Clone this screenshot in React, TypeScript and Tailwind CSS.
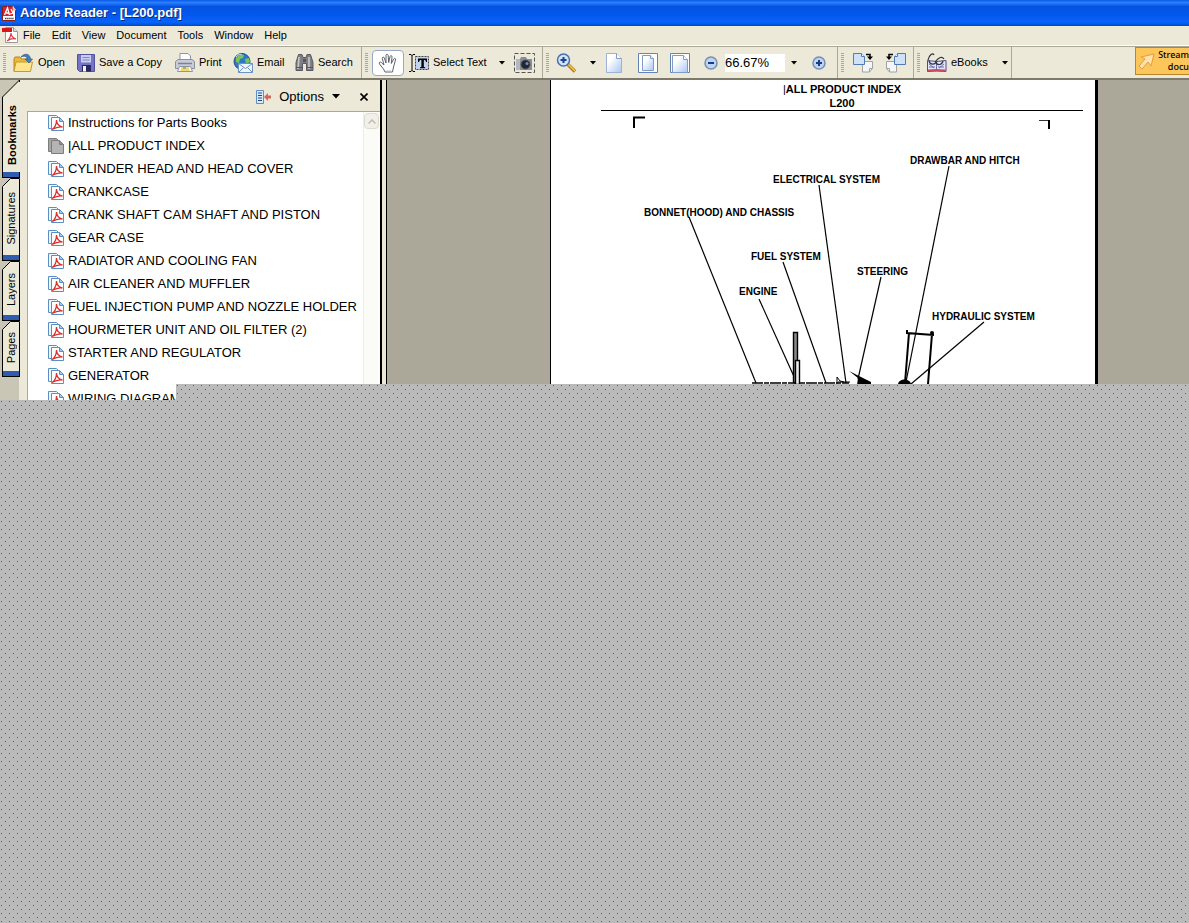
import React, { useState } from 'react';

const menus = ['File', 'Edit', 'View', 'Document', 'Tools', 'Window', 'Help'];

const bookmarks = [
  'Instructions for Parts Books',
  '|ALL PRODUCT INDEX',
  'CYLINDER HEAD AND HEAD COVER',
  'CRANKCASE',
  'CRANK SHAFT CAM SHAFT AND PISTON',
  'GEAR CASE',
  'RADIATOR AND COOLING FAN',
  'AIR CLEANER AND MUFFLER',
  'FUEL INJECTION PUMP AND NOZZLE HOLDER',
  'HOURMETER UNIT AND OIL FILTER (2)',
  'STARTER AND REGULATOR',
  'GENERATOR',
  'WIRING DIAGRAM',
];

const tabs = [
  { label: 'Bookmarks', height: 'h-[98px]' },
  { label: 'Signatures', height: 'h-[83px]' },
  { label: 'Layers', height: 'h-[60px]' },
  { label: 'Pages', height: 'h-[56px]' },
];

const labels = [
  { text: 'DRAWBAR AND HITCH', x: 359, y: 53 },
  { text: 'ELECTRICAL SYSTEM', x: 222, y: 72 },
  { text: 'BONNET(HOOD) AND CHASSIS', x: 93, y: 105 },
  { text: 'FUEL SYSTEM', x: 200, y: 149 },
  { text: 'STEERING', x: 306, y: 164 },
  { text: 'ENGINE', x: 188, y: 184 },
  { text: 'HYDRAULIC SYSTEM', x: 381, y: 209 },
];

/* ---------- icons ---------- */

const AppIcon = () => (
  <svg width="16" height="17" viewBox="0 0 16 17">
    <path d="M1.500 1.500h10l3 3v11h-13z" fill="#fff" stroke="#8b1a1a" />
    <path d="M2 2h10v9H2z" fill="#d8232a" />
    <path d="M12 1v4h3" fill="#f0e4e4" stroke="#c99" strokeWidth=".8" />
    <path d="M3.500 10l3-7 2 7M5 8h3M10 4l2 4-3 1" fill="none" stroke="#fff" strokeWidth="1.300" />
    <path d="M4 13.500h9" stroke="#444" strokeWidth="1.600" strokeDasharray="1.500 .6" />
  </svg>
);

const PdfIcon = () => (
  <svg width="16" height="17" viewBox="0 0 16 17">
    <path d="M3.500.5h8l4 4v11h-12z" fill="#fff" stroke="#9a9a9a" />
    <path d="M11.500.5v4h4" fill="#ddd" stroke="#9a9a9a" />
    <path d="M0 1h10v4H0z" fill="#d8161c" />
    <path d="M5 14c2-1 4-5 4-8 0 3 2 5 5 6-3-1-6 0-9 2z" fill="none" stroke="#e03a3a" strokeWidth="1.200" />
  </svg>
);

const OpenIcon = () => (
  <svg width="21" height="20" viewBox="0 0 21 20">
    <path d="M1 6l1-2h5l1.500 2H17v12H1z" fill="#e9b93a" stroke="#b58618" />
    <path d="M3 9h16.500l-2 9.500H1z" fill="#ffe48a" stroke="#c79a2b" />
    <path d="M8 4c3-4 9-4 9.500 2h2L16 10l-4-4h2.500c-.5-3-3.500-3.500-6.500-2z" fill="#3f7fc4" stroke="#1f4f8c" strokeWidth=".6" />
  </svg>
);

const SaveIcon = () => (
  <svg width="18" height="18" viewBox="0 0 18 18">
    <path d="M.5.5h17v17h-15l-2-2z" fill="#7672c4" stroke="#5250a0" />
    <path d="M4 1h10v7.500H4z" fill="#c9cdf0" />
    <path d="M5.500 3.500h7M5.500 6h7" stroke="#8488c0" />
    <path d="M5 11h9v6.500H5z" fill="#2a2860" />
    <path d="M6 12h3v5.500H6z" fill="#f4f4ff" />
  </svg>
);

const PrintIcon = () => (
  <svg width="20" height="20" viewBox="0 0 20 20">
    <path d="M5 8V.5h8l2.500 2.500v5z" fill="#fff" stroke="#8c94a8" />
    <path d="M.5 8.500L3 6.500h14l2.500 2v7H.5z" fill="#c9ccd6" stroke="#8b90a0" />
    <path d="M3 10.500h14" stroke="#7c8292" strokeWidth="1.500" />
    <path d="M2.500 18.500l2-5h11l2 5z" fill="#fff" stroke="#8c94a8" />
    <path d="M6 15h8M5.500 17h9" stroke="#f0cc3a" strokeWidth="1.500" />
    <path d="M8 15h3" stroke="#4a7fd0" />
  </svg>
);

const EmailIcon = () => (
  <svg width="20" height="20" viewBox="0 0 20 20">
    <circle cx="9" cy="8.500" r="8" fill="#2f78c8" stroke="#1c4f90" />
    <path d="M3 5c2-3 5-4 8-3l-1 3-3 1-1 4-3-1zM12 6l4-1 1 4-4 2z" fill="#7cc35a" />
    <path d="M3 4c2-3 5-3 6-2" stroke="#d8ecff" fill="none" />
    <path d="M5.500 10.500h14v9h-14z" fill="#eef5ff" stroke="#6b93c4" />
    <path d="M5.500 10.500l7 5 7-5M5.500 19.500l5-5M19.500 19.500l-5-5" fill="none" stroke="#6b93c4" />
  </svg>
);

const SearchIcon = () => (
  <svg width="19" height="19" viewBox="0 0 19 19">
    <path
      d="M3.500 1.500h3.500l1 3h3l1-3h3.500l2.500 8v8h-6.500v-7h-4v7H1v-8z"
      fill="#808084"
      stroke="#5a5a5e"
      strokeLinejoin="round"
    />
    <path d="M4 4L3 16M14 4v12" stroke="#c8c8cc" strokeWidth="1.600" />
    <path d="M8 6h3v3H8z" fill="#55555a" />
    <path d="M1 14.500h6.500M11.500 14.500H18" stroke="#55555a" />
  </svg>
);

const HandIcon = () => (
  <svg width="20" height="20" viewBox="0 0 20 20">
    <path
      d="M7 19l-1.500-3L1.500 11c-1-1.500.5-2.500 1.800-1.500L6 12 4.300 5.500c-.3-1.700 1.500-2 2-.5L8 10V2.500c0-1.700 2-1.700 2.200 0L10.700 9.500l1.300-6c.4-1.500 2.200-1 2 .5L13.300 10.500l2.400-4.500c.8-1.300 2.300-.5 1.800 1L15.500 14l-1 5z"
      fill="#fff"
      stroke="#62626e"
    />
    <path d="M8 18h5" stroke="#b8bcc8" />
  </svg>
);

const SelectTextIcon = () => (
  <svg width="20" height="18" viewBox="0 0 20 18">
    <path d="M0 .5h2l1 1 1-1h2M0 17.500h2l1-1 1 1h2M3 1v16" fill="none" stroke="#000" />
    <path d="M6.500 2.500h13v13h-13z" fill="#c3d5ee" stroke="#444" strokeDasharray="2 1" />
    <path d="M9 8V4.500h9V8h-1l-.7-1.900h-1.500V13l1.400.3v.9h-5.200v-.9l1.400-.3V6.100h-1.500L10 8z" fill="#000" />
  </svg>
);

const CameraIcon = () => (
  <svg width="21" height="20" viewBox="0 0 21 20">
    <path d="M.5.5h20v19H.5z" fill="none" stroke="#555" strokeDasharray="4 2" />
    <path d="M2 6h4l1-2h5l1 2h5v11H2z" fill="#888d96" />
    <path d="M2 6h4v11H2z" fill="#b4b8c0" />
    <circle cx="11.500" cy="11.500" r="4.500" fill="#23262e" stroke="#555" />
    <circle cx="13" cy="10.500" r="1.500" fill="#6f8fd8" />
  </svg>
);

const ZoomIcon = () => (
  <svg width="21" height="20" viewBox="0 0 21 20">
    <path d="M12 11.500l7 7" stroke="#b07818" strokeWidth="3.500" />
    <path d="M12 11l7 7" stroke="#f6c84e" strokeWidth="1.500" />
    <circle cx="7.500" cy="7" r="6" fill="#cfe3fb" stroke="#4a6fae" strokeWidth="1.500" />
    <path d="M4.500 7h6M7.500 4v6" stroke="#1f3f86" strokeWidth="2" />
  </svg>
);

const PageIcon = ({ frame = 0 }: { frame?: number }) => (
  <svg width={frame ? 20 : 16} height="20" viewBox={frame ? '0 0 20 20' : '2 0 16 20'}>
    <defs>
      <linearGradient id={`sheet-${frame}`} x1="0" y1="0" x2="1" y2="1">
        <stop offset="0.300" stopColor="#fff" />
        <stop offset="1" stopColor="#a9c6f2" />
      </linearGradient>
    </defs>
    {frame > 0 && <path d="M.5.5h19v19H.5z" fill="#fff" stroke="#6484b4" />}
    {frame === 1 && (
      <>
        <path d="M4.500 2.500h8l3 3v12h-11z" fill="url(#sheet-1)" stroke="#7f9cc8" />
        <path d="M12.500 2.500v3h3" fill="#fff" stroke="#7f9cc8" />
      </>
    )}
    {frame === 2 && (
      <>
        <path d="M2.500 2.500h11l4 4v13h-15z" fill="url(#sheet-2)" stroke="#7f9cc8" />
        <path d="M13.500 2.500v4h4" fill="#fff" stroke="#7f9cc8" />
      </>
    )}
    {frame === 0 && (
      <>
        <path d="M2.500.5h10l5 5v14h-15z" fill="url(#sheet-0)" stroke="#9db2d6" />
        <path d="M12.500.5v5h5" fill="#fff" stroke="#7f9cc8" />
      </>
    )}
  </svg>
);

const RoundIcon = ({ plus }: { plus?: boolean }) => (
  <svg width="14" height="14" viewBox="0 0 14 14">
    <circle cx="7" cy="7" r="6" fill="#bcd5f6" stroke="#7a8fb0" strokeWidth="1.500" />
    <path d={plus ? 'M4 7h6M7 4v6' : 'M4 7h6'} stroke="#1c3c80" strokeWidth="2" />
  </svg>
);

const RotateIcon = ({ left }: { left?: boolean }) => (
  <svg width="21" height="20" viewBox="0 0 21 20">
    <g transform={left ? 'matrix(-1 0 0 1 21 0)' : undefined}>
      <path d="M9.500 8.500h10v7l-3 3.500h-7z" fill="#f6f6f6" stroke="#a2a2a2" />
      <path d="M19.500 15.500h-3V19" fill="none" stroke="#a2a2a2" />
      <path d="M.5.5h8l3 3v8H.5z" fill="#cfe2fa" stroke="#4f7cb4" />
      <path d="M8.500.5v3h3" fill="#fff" stroke="#4f7cb4" />
      <path d="M13 1.500h4V4" fill="none" stroke="#000" strokeWidth="1.500" />
      <path d="M14 3.500h6L17 7z" fill="#000" />
    </g>
  </svg>
);

const EbooksIcon = () => (
  <svg width="20" height="20" viewBox="0 0 20 20">
    <path d="M.5 7.500l9 1 9.500-1v11l-9.500-.5-9 .5z" fill="#e3e6fb" stroke="#4c4c90" />
    <path d="M1 17.500l8.500-.5 9 .5" stroke="#d04a5a" strokeWidth="2" fill="none" />
    <path d="M9.500 9v8M2 14h6M11 14h6M2 11l5 4M17 11l-5 4" stroke="#6a6ab0" />
    <path d="M1 7C2 2 6-1 7 2M8 9c4-5 7-6 9-3M2 8c1 4 6 4 7 1 1 4 6 3 7-1" fill="none" stroke="#333" strokeWidth="1.200" />
  </svg>
);

const BookmarkIcon = ({ current }: { current?: boolean }) => (
  <svg width="16" height="16" viewBox="0 0 16 16" className="shrink-0">
    <path d="M.5.5h8l2 2v11H.5z" fill={current ? '#a6a6a6' : '#eef5fc'} stroke={current ? '#7c7c7c' : '#5b8fc4'} />
    <path d="M3.500 2.500h8l4 4v9h-12z" fill={current ? '#b4b4b4' : '#fff'} stroke={current ? '#7c7c7c' : '#5b8fc4'} />
    <path d="M11.500 2.500v4h4z" fill={current ? '#909090' : '#a9cbea'} stroke={current ? '#7c7c7c' : '#5b8fc4'} />
    {!current && (
      <path d="M4 14.500c2.500-1.500 4.500-5 4.500-9.500 0 4 2.500 6 6 7-3.500-.5-7 .5-10.500 2.500z" fill="none" stroke="#dc3030" strokeWidth="1.300" />
    )}
  </svg>
);

const OptionsIcon = () => (
  <svg width="15" height="14" viewBox="0 0 15 14">
    <path d="M.5.5h7v13h-7z" fill="#d9ebfb" stroke="#5a8fc8" />
    <path d="M2 3h4M2 5.500h4M2 8h4M2 10.500h4" stroke="#2c4470" />
    <path d="M8 7l4-4v2.500h3v3h-3V11z" fill="#d0695c" />
  </svg>
);

const Caret = () => (
  <svg width="6" height="4" viewBox="0 0 6 4" className="shrink-0">
    <path d="M0 0h6L3 3.500z" fill="#000" />
  </svg>
);

/* ---------- toolbar parts ---------- */

const Group = ({ width, children }: { width: string; children: React.ReactNode }) => (
  <div className={`flex shrink-0 items-center border-r border-[#aca899] pl-[3px] ${width}`}>
    <span className="mr-1 h-[19px] w-[3px] shrink-0 bg-[repeating-linear-gradient(#aaa794_0_1px,#ece9d8_1px_2px)]" />
    {children}
  </div>
);

const Tool = ({
  width,
  label,
  name,
  icon,
}: {
  width: string;
  label?: string;
  name?: string;
  icon: React.ReactNode;
}) => (
  <button
    type="button"
    aria-label={name || label}
    className={`flex h-7 shrink-0 items-center gap-1 whitespace-nowrap pl-[3px] ${width}`}
  >
    {icon}
    {label && <span>{label}</span>}
  </button>
);

const DropArrow = ({ name, width }: { name: string; width: string }) => (
  <button type="button" aria-label={name} className={`flex h-7 shrink-0 items-center justify-center ${width}`}>
    <Caret />
  </button>
);

const Toolbar = () => {
  const [zoom, setZoom] = useState('66.67%');

  return (
    <div className="flex h-[34px] shrink-0 overflow-hidden border-t border-b-2 border-t-[#aca899] border-b-[#7d7a6c] bg-[#ece9d8] text-[11px]">
      <Group width="w-[362px]">
        <Tool width="w-16" label="Open" icon={<OpenIcon />} />
        <Tool width="w-[98px]" label="Save a Copy" icon={<SaveIcon />} />
        <Tool width="w-[58px]" label="Print" icon={<PrintIcon />} />
        <Tool width="w-[62px]" label="Email" icon={<EmailIcon />} />
        <Tool width="w-[66px]" label="Search" icon={<SearchIcon />} />
      </Group>
      <Group width="w-[181px]">
        <button
          type="button"
          aria-label="Hand Tool"
          className="mr-0.5 flex h-[26px] w-8 shrink-0 items-center justify-center rounded-sm border border-[#98a8c8] bg-white"
        >
          <HandIcon />
        </button>
        <Tool width="w-[87px]" label="Select Text" icon={<SelectTextIcon />} />
        <DropArrow name="Selection tools" width="w-[18px]" />
        <Tool width="w-7" name="Snapshot Tool" icon={<CameraIcon />} />
      </Group>
      <Group width="w-[295px]">
        <Tool width="w-[30px]" name="Zoom In Tool" icon={<ZoomIcon />} />
        <DropArrow name="Zoom tools" width="w-5" />
        <Tool width="w-8" name="Actual Size" icon={<PageIcon />} />
        <Tool width="w-8" name="Fit Page" icon={<PageIcon frame={1} />} />
        <Tool width="w-[34px]" name="Fit Width" icon={<PageIcon frame={2} />} />
        <Tool width="w-6" name="Zoom Out" icon={<RoundIcon />} />
        <input
          aria-label="Zoom"
          value={zoom}
          onChange={(e) => setZoom(e.target.value)}
          className="h-[18px] w-[60px] shrink-0 bg-white text-[13px] outline-none"
        />
        <DropArrow name="Zoom levels" width="w-[18px]" />
        <span className="w-1.5" />
        <Tool width="w-6" name="Zoom In" icon={<RoundIcon plus />} />
      </Group>
      <Group width="w-[76px]">
        <span className="w-0.5" />
        <Tool width="w-8" name="Rotate Clockwise" icon={<RotateIcon />} />
        <Tool width="w-[26px]" name="Rotate Counterclockwise" icon={<RotateIcon left />} />
      </Group>
      <Group width="w-[98px]">
        <Tool width="w-[74px]" label="eBooks" icon={<EbooksIcon />} />
        <DropArrow name="eBooks menu" width="w-3.5" />
      </Group>
      <button
        type="button"
        className="ml-auto flex h-7 w-[54px] shrink-0 items-center border border-r-0 border-[#b8862c] bg-[#fcc65a] pl-0.5 text-left"
      >
        <svg width="18" height="18" viewBox="0 0 18 18" className="shrink-0">
          <path d="M16 2L3 5l4 2-6 7 3 3 6-7 3 4z" fill="#ffe3ae" stroke="#e89a3c" />
        </svg>
        <span className="flex flex-1 flex-col items-end font-['Noto_Sans',sans-serif] text-[9px] font-medium leading-3">
          <span>Stream</span>
          <span>docu</span>
        </span>
      </button>
    </div>
  );
};

/* ---------- navigation pane ---------- */

const TabStrip = () => (
  <div role="tablist" className="flex w-[27px] shrink-0 flex-col bg-[linear-gradient(to_right,#c9c6b6_19px,#ece9d8_19px)]">
    {tabs.map((tab, i) => (
      <button
        key={tab.label}
        type="button"
        role="tab"
        aria-selected={i === 0}
        className={`ml-0.5 flex w-[18px] shrink-0 flex-col items-center ${tab.height}`}
      >
        <svg width="18" height={i === 0 ? 18 : 9} viewBox={i === 0 ? '0 0 18 18' : '0 0 18 9'} className="shrink-0">
          {i === 0 ? (
            <path d="M.5 18v-1L17.500 0v18" fill="#ece9d8" stroke="#000" />
          ) : (
            <path d="M.5 9V8.500l8-8h9V9" fill="#ece9d8" stroke="#000" />
          )}
          {i === 0 && <path d="M17.500 2v16" stroke="#ece9d8" />}
        </svg>
        <span
          className={`flex min-h-0 w-full flex-1 items-center justify-center border-l border-black bg-[#ece9d8] ${
            i === 0 ? 'font-bold' : 'border-r pb-1.5'
          }`}
        >
          <span className="rotate-180 whitespace-nowrap text-[11px] leading-4 [writing-mode:vertical-rl]">{tab.label}</span>
        </span>
        <span className="h-1.5 w-full shrink-0 border-x border-b border-black bg-[#2f5cae]" />
      </button>
    ))}
  </div>
);

const BookmarksPane = () => (
  <aside className="flex w-[353px] shrink-0 flex-col bg-[#ece9d8]">
    <div className="flex h-[31px] shrink-0 items-center justify-end pt-0.5 text-[13px]">
      <button type="button" className="flex items-center gap-2">
        <OptionsIcon />
        <span>Options</span>
        <svg width="8" height="5" viewBox="0 0 8 5">
          <path d="M0 0h8L4 4.500z" fill="#000" />
        </svg>
      </button>
      <button type="button" aria-label="Close" className="mr-3 ml-5">
        <svg width="8" height="8" viewBox="0 0 8 8">
          <path d="M.5.5l7 7M7.500.5l-7 7" stroke="#000" strokeWidth="1.600" />
        </svg>
      </button>
    </div>
    <div className="flex min-h-0 flex-1 border-t border-l border-[#aca899] bg-white">
      <ul className="min-w-0 flex-1">
        {bookmarks.map((title, i) => (
          <li key={title} className="h-[23px]">
            <a href="#" className="flex h-[21px] items-center gap-1 pl-5 text-[13px] whitespace-nowrap">
              <BookmarkIcon current={i === 1} />
              {title}
            </a>
          </li>
        ))}
      </ul>
      <div className="w-[17px] shrink-0 border-l border-[#eeede5] bg-[#fbfbf8] pt-px">
        <button
          type="button"
          aria-label="Scroll up"
          className="flex h-4 w-[15px] items-center justify-center rounded-sm border border-[#dedcd0] bg-[#f0efe8]"
        >
          <svg width="8" height="5" viewBox="0 0 8 5">
            <path d="M.5 4.500L4 1l3.500 3.500" fill="none" stroke="#c0beb2" strokeWidth="1.500" />
          </svg>
        </button>
      </div>
    </div>
  </aside>
);

/* ---------- document ---------- */

const Diagram = () => (
  <svg width="544" height="306" viewBox="0 0 544 306" className="font-['Liberation_Sans',Arial,sans-serif]">
    {/* crop marks */}
    <path d="M83 17V6.500h11" fill="none" stroke="#000" strokeWidth="2" />
    <path d="M488 9.500h10" stroke="#333" />
    <path d="M498 9v9" stroke="#000" strokeWidth="2" />

    <g fill="none" stroke="#000" strokeWidth="1.200">
      <path d="M398 55L355 271" />
      <path d="M268 74L295 272" />
      <path d="M138 106L205 272" />
      <path d="M232 151L275 272" />
      <path d="M330 166L307 268" />
      <path d="M208 188L245 270" />
      <path d="M433 211L360 273" />
    </g>

    {/* tractor, upper edge */}
    <path d="M201 272h97" stroke="#000" strokeWidth="1.500" strokeDasharray="11 1 5 1" />
    <path d="M242.500 221.500h4v50h-4z" fill="#888" stroke="#000" strokeWidth="1.400" />
    <path d="M244.500 249.500h4v24h-4z" fill="#eee" stroke="#000" strokeWidth="1.400" />
    <path d="M286 273v-7l3 4 4 1M287 271h12" fill="none" stroke="#000" />
    <path d="M298 260l22 11v3h-14l1-7z" fill="#000" />
    <path d="M356 219v3l27 2M358 222l-4 50M381 223l-4 50" fill="none" stroke="#000" strokeWidth="2" />
    <circle cx="381" cy="222" r="2" />
    <path d="M347 273c1-6 12-6 13 0z" fill="#000" />

    {labels.map((l) => (
      <text key={l.text} x={l.x} y={l.y} fontSize="10" fontWeight="bold">
        {l.text}
      </text>
    ))}
  </svg>
);

const Workspace = () => (
  <main className="min-w-0 flex-1 overflow-hidden bg-[#aba899]">
    <article className="ml-[163px] h-full w-[548px] border-r-[3px] border-l border-black bg-white">
      <header className="mx-[50px] h-[31px] w-[482px] border-b border-black pt-0.5 text-center text-[11px] leading-[14px] font-bold">
        <h1>
          <span className="font-normal">|</span>ALL PRODUCT INDEX
        </h1>
        <h2>L200</h2>
      </header>
      <Diagram />
    </article>
  </main>
);

// Area of the window that has not been painted yet
const Unpainted = ({ place, id }: { place: string; id: string }) => (
  <svg className={`absolute ${place}`} width="100%" height="100%" aria-hidden="true">
    <defs>
      <pattern id={id} width="8" height="8" patternUnits="userSpaceOnUse">
        <path d="M0 0h8v8H0z" fill="#bababa" />
        <path d="M1 1h1v1H1zM5 5h1v1H5z" fill="#5c5c5c" />
      </pattern>
    </defs>
    <rect width="100%" height="100%" fill={`url(#${id})`} />
  </svg>
);

const App = () => {
  return (
    <div className="relative flex h-screen flex-col overflow-hidden bg-[#ece9d8] font-['Liberation_Sans',Arial,sans-serif] text-black">
      <div className="flex h-[26px] shrink-0 items-center gap-[3px] bg-[linear-gradient(#0a5be8_0%,#2a80ff_10%,#0453e0_25%,#0458ee_60%,#0665fc_85%,#0148c4_100%)] pl-px">
        <AppIcon />
        <span className="text-[13px] font-bold text-white [text-shadow:1px_1px_0_#0a2a78]">Adobe Reader - [L200.pdf]</span>
      </div>
      <nav className="flex h-5 shrink-0 items-center border-b border-white pl-0.5 text-[11px]">
        <PdfIcon />
        <ul className="flex gap-[11px] pl-[5px]">
          {menus.map((menu) => (
            <li key={menu}>
              <button type="button">{menu}</button>
            </li>
          ))}
        </ul>
      </nav>
      <Toolbar />
      <div className="flex min-h-0 flex-1">
        <TabStrip />
        <BookmarksPane />
        <div className="w-[7px] shrink-0 border-r border-l-2 border-black bg-[#ece9d8]" />
        <Workspace />
      </div>
      <Unpainted id="dots-upper" place="left-[176px] top-[384px] h-4" />
      <Unpainted id="dots-lower" place="left-0 top-[400px]" />
    </div>
  );
};

export default App;
